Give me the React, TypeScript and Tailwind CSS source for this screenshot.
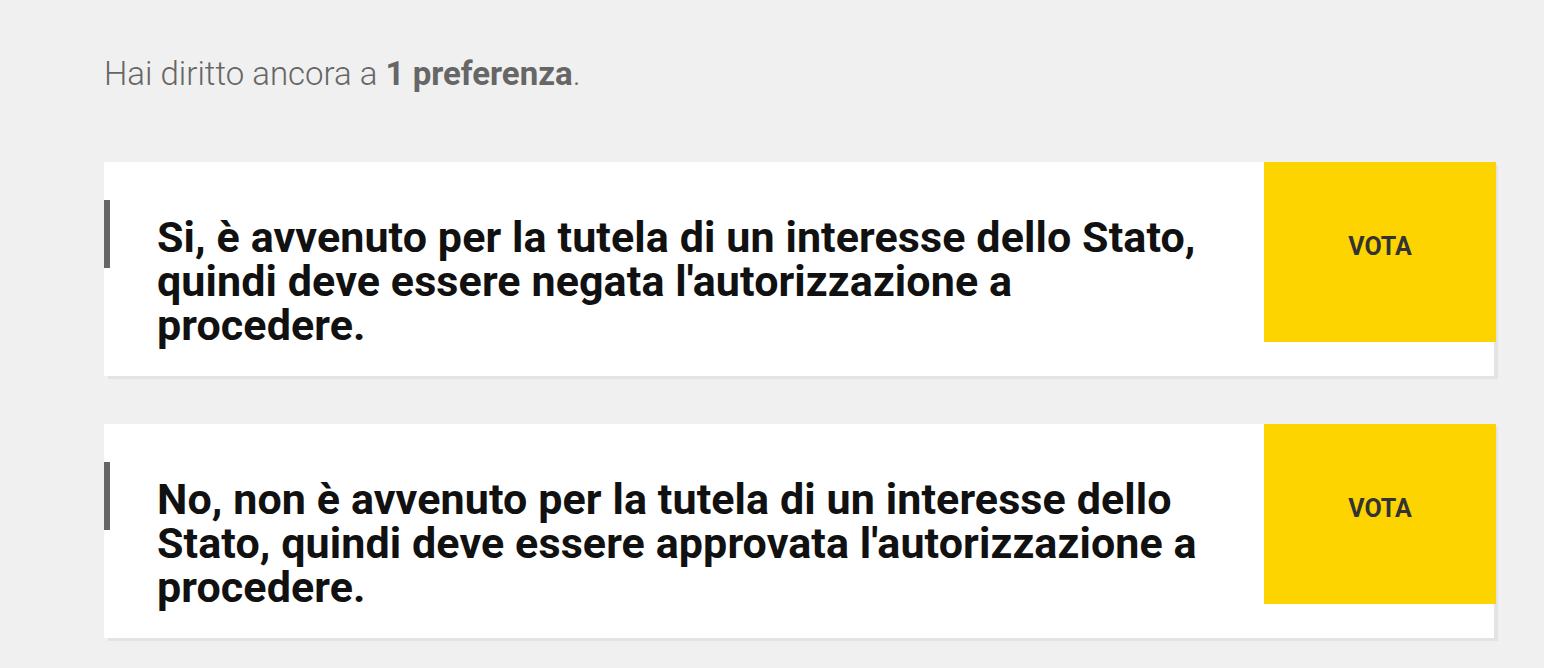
const options = [
  {
    id: 'si',
    lines: ['Si, è avvenuto per la tutela di un interesse dello Stato,', "quindi deve essere negata l'autorizzazione a", 'procedere.'],
  },
  {
    id: 'no',
    lines: ['No, non è avvenuto per la tutela di un interesse dello', "Stato, quindi deve essere approvata l'autorizzazione a", 'procedere.'],
  },
];

function OptionCard({ lines }: { lines: string[] }) {
  return (
    <div className="flex w-[1390px] items-start bg-white shadow-[4px_3px_0_0_#e3e3e3]">
      {/* Answer text with left marker */}
      <div className="flex flex-1 items-start pt-[38px] pb-[29px]">
        <span className="h-[68px] w-[6px] shrink-0 bg-[#666666]" />
        <p className="ml-[47px] mt-[15px] text-[43px] font-bold leading-[44px] tracking-[0.1px] text-[#111111] [font-family:Roboto,'Noto_Sans',sans-serif]">
          {lines.map((l, i) => (
            <span key={i} className="block whitespace-nowrap">
              {l}
            </span>
          ))}
        </p>
      </div>

      {/* Vote button */}
      <button className="-mr-[2px] flex h-[180px] w-[232px] shrink-0 items-center justify-center bg-[#fdd400] pb-[10px] text-[25px] font-bold text-[#333333] [font-family:Roboto,sans-serif]">
        VOTA
      </button>
    </div>
  );
}

export default function App() {
  return (
    <div className="min-h-screen bg-[#f0f0f0] pl-[104px] pt-[52px] [font-family:Roboto,sans-serif]">
      <p className="text-[33px] font-light leading-[44px] text-[#666666]">
        Hai diritto ancora a <span className="font-bold">1 preferenza</span>.
      </p>

      <div className="mt-[66px] flex flex-col gap-[48px]">
        {options.map((o) => (
          <OptionCard key={o.id} lines={o.lines} />
        ))}
      </div>
    </div>
  );
}
